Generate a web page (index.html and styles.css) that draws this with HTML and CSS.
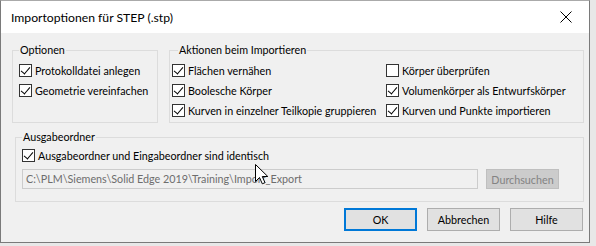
FILE: index.html
```html
<!DOCTYPE html>
<html lang="de">
<head>
<meta charset="utf-8">
<title>Importoptionen für STEP (.stp)</title>
<link rel="stylesheet" href="styles.css">
</head>
<body>
<div class="desk">
  <div class="window">
    <div class="titlebar">
      <span class="title">Importoptionen für STEP (.stp)</span>
      <span class="close">
        <svg width="12" height="12" viewBox="0 0 12 12"><path d="M0.5 0.5 L11.5 11.5 M11.5 0.5 L0.5 11.5" stroke="#000" stroke-width="1"/></svg>
      </span>
    </div>
    <div class="client">
      <div class="top-row">
        <fieldset class="group g-options">
          <legend>Optionen</legend>
          <label class="cb"><span class="box checked"></span>Protokolldatei anlegen</label>
          <label class="cb"><span class="box checked"></span>Geometrie vereinfachen</label>
        </fieldset>
        <fieldset class="group g-actions">
          <legend>Aktionen beim Importieren</legend>
          <div class="cols">
            <div class="col col-left">
              <label class="cb"><span class="box checked"></span>Flächen vernähen</label>
              <label class="cb"><span class="box checked"></span>Boolesche Körper</label>
              <label class="cb"><span class="box checked"></span>Kurven in einzelner Teilkopie gruppieren</label>
            </div>
            <div class="col col-right">
              <label class="cb"><span class="box"></span>Körper überprüfen</label>
              <label class="cb"><span class="box checked"></span>Volumenkörper als Entwurfskörper</label>
              <label class="cb"><span class="box checked"></span>Kurven und Punkte importieren</label>
            </div>
          </div>
        </fieldset>
      </div>
      <fieldset class="group g-output">
        <legend>Ausgabeordner</legend>
        <label class="cb"><span class="box checked"></span>Ausgabeordner und Eingabeordner sind identisch</label>
        <div class="path-row">
          <div class="field">C:\PLM\Siemens\Solid Edge 2019\Training\Import_Export</div>
          <div class="btn disabled">Durchsuchen</div>
        </div>
      </fieldset>
      <div class="buttons">
        <div class="btn default">OK</div>
        <div class="btn">Abbrechen</div>
        <div class="btn">Hilfe</div>
      </div>
    </div>
    <svg class="cursor" width="14" height="21" viewBox="0 0 14 21"><path d="M0.5 0.5 L0.5 17.5 L4.5 13.5 L7.3 19.8 L10 18.7 L7.3 12.5 L12.8 12.5 Z" fill="#fff" stroke="#000" stroke-width="1" stroke-linejoin="miter"/></svg>
  </div>
</div>
</body>
</html>
```
FILE: styles.css
```css
* { box-sizing: border-box; }
html, body { margin: 0; padding: 0; }
body {
  width: 596px;
  height: 246px;
  overflow: hidden;
  background: #e8e8e8;
  font-family: Lato, "Liberation Sans", Arial, sans-serif;
  font-size: 10.75px;
  color: #000;
}
.desk { width: 596px; height: 246px; }
.window {
  position: relative;
  width: 590px;
  height: 243px;
  border: 1px solid #7a7a7a;
  border-top-color: #aaaaaa;
  background: #f0f0f0;
  display: flex;
  flex-direction: column;
}
.titlebar {
  height: 32px;
  background: #fff;
  display: flex;
  align-items: center;
  justify-content: space-between;
  padding: 0 0 0 10px;
}
.title { font-size: 12.2px; }
.close {
  width: 46px;
  height: 31px;
  display: flex;
  align-items: center;
  justify-content: center;
}
.client {
  flex: 1;
  padding: 9px 5px 0 11px;
  display: flex;
  flex-direction: column;
}
.top-row { display: flex; gap: 11px; }
.group {
  margin: 0;
  border: 1px solid #dcdcdc;
  padding: 0;
  min-width: 0;
}
.group legend {
  padding: 0 1px;
  margin-left: 0;
  line-height: 16px;
  color: #000;
}
.g-options {
  width: 146px;
  height: 81px;
  padding: 2px 0 0 6px;
}
.g-actions {
  width: 415px;
  height: 81px;
  padding: 2px 0 0 2px;
}
.g-actions legend { margin-left: 6px; }
.cols { display: flex; }
.col { display: flex; flex-direction: column; }
.col-left { width: 214px; }
.cb {
  display: flex;
  align-items: center;
  height: 20px;
  white-space: nowrap;
}
.box {
  width: 13px;
  height: 13px;
  border: 1px solid #333;
  background: #fff;
  margin-right: 3px;
  flex: none;
  position: relative;
}
.box.checked::after {
  content: "";
  position: absolute;
  left: 3px;
  top: 0px;
  width: 4px;
  height: 8px;
  border: solid #000;
  border-width: 0 1px 1px 0;
  transform: rotate(40deg);
}
.g-output {
  margin: 6px 0 0 3px;
  width: 569px;
  height: 73px;
  padding: 0 0 0 6px;
}
.path-row {
  display: flex;
  gap: 8px;
  margin-top: 4px;
}
.field {
  width: 456px;
  height: 20px;
  border: 1px solid #cccccc;
  background: #f0f0f0;
  color: #6d6d6d;
  line-height: 18px;
  padding-left: 3px;
  white-space: nowrap;
  overflow: hidden;
}
.btn {
  height: 20px;
  border: 1px solid #adadad;
  background: #e1e1e1;
  display: flex;
  align-items: center;
  justify-content: center;
}
.btn.disabled {
  width: 73px;
  background: #cccccc;
  border-color: #bfbfbf;
  color: #838383;
}
.buttons {
  display: flex;
  justify-content: flex-end;
  gap: 10px;
  margin-top: 6px;
  padding-right: 1px;
}
.buttons .btn { width: 73px; height: 23px; }
.buttons .btn.default { border: 2px solid #0078d7; }
.cursor {
  position: absolute;
  left: 254px;
  top: 163px;
}
```
